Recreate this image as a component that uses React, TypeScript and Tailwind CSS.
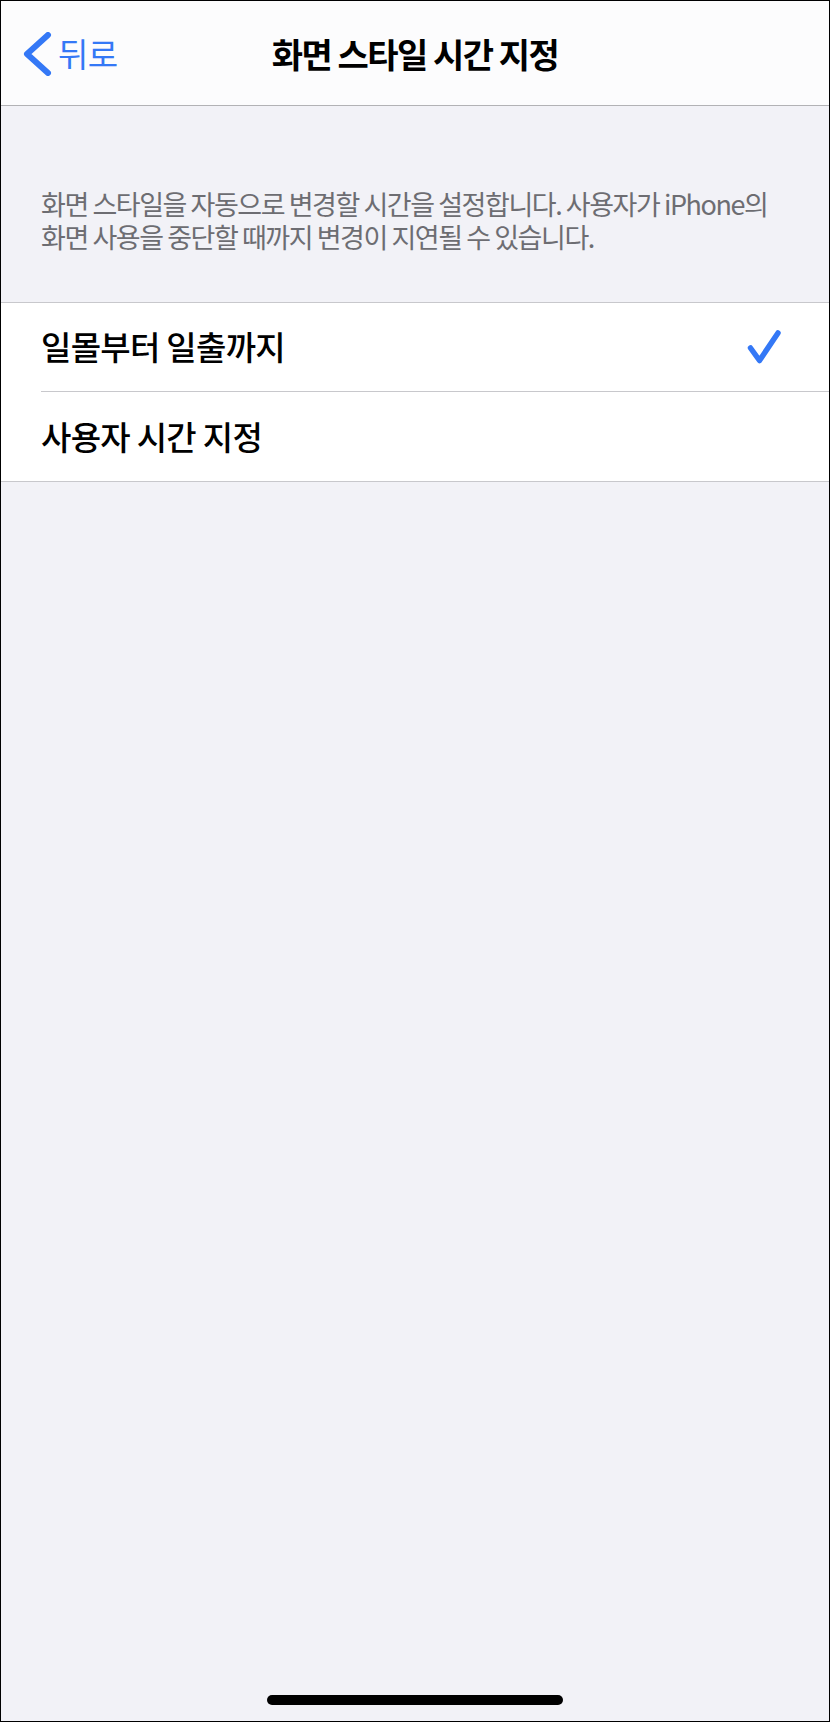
import React from "react";

const font = {
  fontFamily: '"Noto Sans CJK KR", "Noto Sans", sans-serif',
};

function BackChevron() {
  return (
    <svg width="30" height="44" viewBox="0 0 30 44" fill="none">
      <path
        d="M26 3 L5 22 L26 41"
        stroke="#3478f6"
        strokeWidth="6"
        strokeLinecap="round"
        strokeLinejoin="round"
      />
    </svg>
  );
}

function Check() {
  return (
    <svg width="34" height="34" viewBox="0 0 34 34" fill="none">
      <path
        d="M3.5 18 L12.5 30.5 L31 3"
        stroke="#3478f6"
        strokeWidth="5.5"
        strokeLinecap="round"
        strokeLinejoin="round"
      />
    </svg>
  );
}

function Row({
  label,
  checked,
  last,
}: {
  label: string;
  checked?: boolean;
  last?: boolean;
}) {
  return (
    <div className="pl-10">
      <div
        className={
          "flex h-[89px] items-center justify-between pr-12 " +
          (last ? "" : "border-b border-[#c8c8cc]")
        }
      >
        <span className="text-[33px] font-medium tracking-[-0.7px] text-black">
          {label}
        </span>
        {checked && <Check />}
      </div>
    </div>
  );
}

export default function App() {
  return (
    <div
      className="flex h-[1722px] w-[830px] flex-col overflow-hidden border border-black bg-[#f2f2f7]"
      style={font}
    >
      <header className="grid h-[105px] grid-cols-[1fr_auto_1fr] items-center border-b border-[#b2b2b5] bg-[#fcfcfd]">
        <button className="flex items-center gap-[6px] pl-[21px] pt-[1px]">
          <BackChevron />
          <span className="text-[33px] leading-none tracking-[-0.5px] text-[#3478f6]">
            뒤로
          </span>
        </button>
        <h1 className="text-[34px] font-semibold tracking-[-1.5px] text-black">
          화면 스타일 시간 지정
        </h1>
        <div />
      </header>

      <p className="px-10 pb-[49px] pt-[81px] text-[27px] leading-[33px] tracking-[-1.45px] text-[#6d6d72]">
        화면 스타일을 자동으로 변경할 시간을 설정합니다. 사용자가 iPhone의
        <br />
        화면 사용을 중단할 때까지 변경이 지연될 수 있습니다.
      </p>

      <div className="border-y border-[#c8c8cc] bg-white">
        <Row label="일몰부터 일출까지" checked />
        <Row label="사용자 시간 지정" last />
      </div>

      <div className="mt-auto mb-[16px] flex justify-center">
        <div className="h-[10px] w-[296px] rounded-full bg-black" />
      </div>
    </div>
  );
}
